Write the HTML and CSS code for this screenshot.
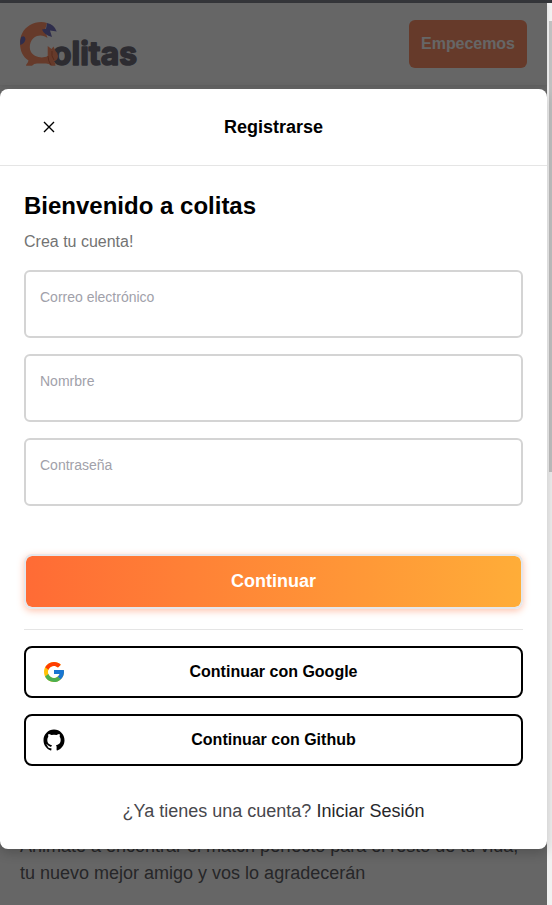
FILE: index.html
```html
<!DOCTYPE html>
<html lang="es">
<head>
<meta charset="utf-8">
<title>Colitas</title>
<link rel="stylesheet" href="styles.css">
</head>
<body>
<div class="strip"></div>
<div class="window">
  <main class="page">
    <header class="navbar">
      <svg class="logo" width="120" height="48" viewBox="0 0 120 48">
        <text class="wordmark" x="32" y="45" textLength="85" lengthAdjust="spacingAndGlyphs">olitas</text>
        <path fill="#ff9169" d="M27 3C22 1 15 2 10 5C3 9 0 16 0 23C0 31 3 37 8.500 40.500C8 43 6 44 6 45.700H12Q14 43.500 17 43.500H26Q29 43.500 31 45.700H35.500Q35.500 43 34 41.500Q38 40 38 36Q38 33 35.500 31L33.500 26.500L31.500 29L27.700 26V36C22 39 14 37 11 32C8 26 11 18 17 16C21 14.700 25 16 27.500 18L25 10Z"/>
        <path fill="#7471bd" d="M27 3Q34 4 36.700 11.500L30 10.500L32 17Q24 15 22 9.500L26 8.700ZM1.200 17Q5 15 5.500 19Q5 23.500 0.300 25Q-.5 21 1.200 17Z"/>
        <path fill="none" stroke="#c25c3e" stroke-width=".7" d="M28 36Q28 41 31 45M32 31Q31 36 34 40"/>
      </svg>
      <button class="start">Empecemos</button>
    </header>
    <p class="intro">Animate a encontrar el match perfecto para el resto de tu vida, tu nuevo mejor amigo y vos lo agradecerán</p>
    <div class="overlay">
      <section class="modal">
        <div class="modal-head">
          <svg class="close" width="18" height="18" viewBox="0 0 18 18"><path d="M4 4L14 14M14 4L4 14"/></svg>
          <h1>Registrarse</h1>
          <span></span>
        </div>
        <div class="modal-body">
          <h2>Bienvenido a colitas</h2>
          <p class="sub">Crea tu cuenta!</p>
          <div class="fields">
            <div class="field">Correo electrónico</div>
            <div class="field">Nomrbre</div>
            <div class="field">Contraseña</div>
          </div>
        </div>
        <div class="modal-foot">
          <button class="submit">Continuar</button>
          <hr>
          <button class="social">
            <svg width="24" height="24" viewBox="0 0 48 48"><path fill="#FFC107" d="M43.611,20.083H42V20H24v8h11.303c-1.649,4.657-6.08,8-11.303,8c-6.627,0-12-5.373-12-12c0-6.627,5.373-12,12-12c3.059,0,5.842,1.154,7.961,3.039l5.657-5.657C34.046,6.053,29.268,4,24,4C12.955,4,4,12.955,4,24c0,11.045,8.955,20,20,20c11.045,0,20-8.955,20-20C44,22.659,43.862,21.35,43.611,20.083z"/><path fill="#FF3D00" d="M6.306,14.691l6.571,4.819C14.655,15.108,18.961,12,24,12c3.059,0,5.842,1.154,7.961,3.039l5.657-5.657C34.046,6.053,29.268,4,24,4C16.318,4,9.656,8.337,6.306,14.691z"/><path fill="#4CAF50" d="M24,44c5.166,0,9.86-1.977,13.409-5.192l-6.19-5.238C29.211,35.091,26.715,36,24,36c-5.202,0-9.619-3.317-11.283-7.946l-6.522,5.025C9.505,39.556,16.227,44,24,44z"/><path fill="#1976D2" d="M43.611,20.083H42V20H24v8h11.303c-0.792,2.237-2.231,4.166-4.087,5.571l6.19,5.238C36.971,39.205,44,34,44,24C44,22.659,43.862,21.35,43.611,20.083z"/></svg>
            Continuar con Google
          </button>
          <button class="social">
            <svg width="24" height="24" viewBox="0 0 512 512"><path d="M256 32C132.3 32 32 134.9 32 261.7c0 101.5 64.2 187.5 153.2 217.9a17.56 17.56 0 003.8.4c8.3 0 11.5-6.1 11.5-11.4 0-5.5-.2-19.9-.3-39.1a102.4 102.4 0 01-22.6 2.7c-43.1 0-52.9-33.5-52.9-33.5-10.2-26.5-24.9-33.6-24.9-33.6-19.5-13.7-.1-14.1 1.4-14.1h.1c22.5 2 34.3 23.8 34.3 23.8 11.2 19.6 26.2 25.1 39.6 25.1a63 63 0 0025.6-6c2-14.8 7.8-24.9 14.2-30.7-49.7-5.8-102-25.5-102-113.5 0-25.1 8.7-45.6 23-61.6-2.3-5.8-10-29.2 2.2-60.8a18.64 18.64 0 015-.5c8.1 0 26.4 3.1 56.6 24.1a208.21 208.21 0 01112.2 0c30.2-21 48.5-24.1 56.6-24.1a18.64 18.64 0 015 .5c12.2 31.6 4.5 55 2.2 60.8 14.3 16.1 23 36.6 23 61.6 0 88.2-52.4 107.6-102.3 113.3 8 7.1 15.2 21.1 15.2 42.5 0 30.7-.3 55.5-.3 63 0 5.4 3.1 11.5 11.4 11.5a19.35 19.35 0 004-.4C415.9 449.2 480 363.1 480 261.7 480 134.9 379.7 32 256 32z"/></svg>
            Continuar con Github
          </button>
          <div class="login"><span>¿Ya tienes una cuenta?</span><a>Iniciar Sesión</a></div>
        </div>
      </section>
    </div>
  </main>
  <div class="scrollbar"><div class="thumb"></div></div>
</div>
</body>
</html>
```

FILE: styles.css
```css
* { box-sizing: border-box; }
body {
  margin: 0;
  height: 905px;
  overflow: hidden;
  display: flex;
  flex-direction: column;
  font-family: "Liberation Sans", sans-serif;
  color: #000;
}
h1, h2, p { margin: 0; }
button { font: inherit; margin: 0; padding: 0; }
.strip { height: 3px; background: #35363a; }
.window { flex: 1; display: flex; }
.page {
  position: relative;
  width: 547px;
  height: 902px;
  display: flex;
  flex-direction: column;
  justify-content: space-between;
  background: #fff;
}
.navbar {
  height: 82px;
  padding: 0 20px;
  display: flex;
  align-items: center;
  justify-content: space-between;
  box-shadow: 0 1px 4px rgba(0, 0, 0, .1);
}
.logo { overflow: visible; }
.wordmark {
  font: 700 33px Inter, sans-serif;
  fill: #706e7b;
  stroke: #706e7b;
  stroke-width: 1.6px;
  stroke-linejoin: round;
}
.start {
  width: 118px;
  height: 48px;
  border: 0;
  border-radius: 6px;
  background: #ff9169;
  color: #fff;
  font-size: 16px;
  font-weight: 700;
  letter-spacing: -.05px;
}
.intro {
  padding: 0 20px 18px;
  font-size: 18px;
  line-height: 27px;
  color: #5f5f66;
}
.overlay {
  position: absolute;
  inset: 0;
  padding-top: 86px;
  background: rgba(0, 0, 0, .6);
}
.modal {
  height: 760px;
  border-radius: 8px;
  background: #fff;
  box-shadow: 0 4px 12px rgba(0, 0, 0, .2);
}
.modal-head {
  height: 77px;
  padding: 0 40px;
  display: grid;
  grid-template-columns: 18px 1fr 18px;
  align-items: center;
  border-bottom: 1px solid #e5e5e5;
}
.close { fill: none; stroke: #000; stroke-width: 1.4; }
h1 { text-align: center; font-size: 18px; line-height: 28px; font-weight: 700; }
.modal-body { padding: 24px 24px 0; }
h2 { font-size: 24px; line-height: 32px; font-weight: 700; }
.sub { margin-top: 8px; font-size: 16px; line-height: 24px; color: #737373; }
.fields { margin-top: 16px; display: grid; gap: 16px; }
.field {
  height: 68px;
  padding: 15px 14px;
  border: 2px solid #d4d4d4;
  border-radius: 6px;
  font-size: 14px;
  line-height: 20px;
  color: #a1a1aa;
}
.modal-foot { margin-top: 48px; padding: 0 24px; display: flex; flex-direction: column; }
.submit {
  height: 55px;
  border: 2px solid #e5e7eb;
  border-radius: 8px;
  background: linear-gradient(to right, #ff6b35, #ffad38) padding-box;
  box-shadow: 0 2px 7px rgba(255, 107, 53, .4);
  color: #fff;
  font-size: 18px;
  font-weight: 700;
}
hr { width: 100%; height: 1px; margin: 20px 0 16px; border: 0; background: #e5e5e5; }
.social {
  height: 52px;
  margin-bottom: 16px;
  padding: 0 16px;
  display: grid;
  grid-template-columns: 24px 1fr 24px;
  align-items: center;
  border: 2px solid #000;
  border-radius: 8px;
  background: #fff;
  color: #000;
  font-size: 16px;
  font-weight: 700;
}
.login {
  margin-top: 15px;
  display: flex;
  justify-content: center;
  gap: 5px;
  font-size: 18px;
  line-height: 28px;
  color: #47474c;
}
.login a { color: #27272a; }
.scrollbar { width: 5px; padding: 18px 0 0 2px; background: #f1f1f1; }
.thumb { height: 451px; background: #c1c1c1; }
```
